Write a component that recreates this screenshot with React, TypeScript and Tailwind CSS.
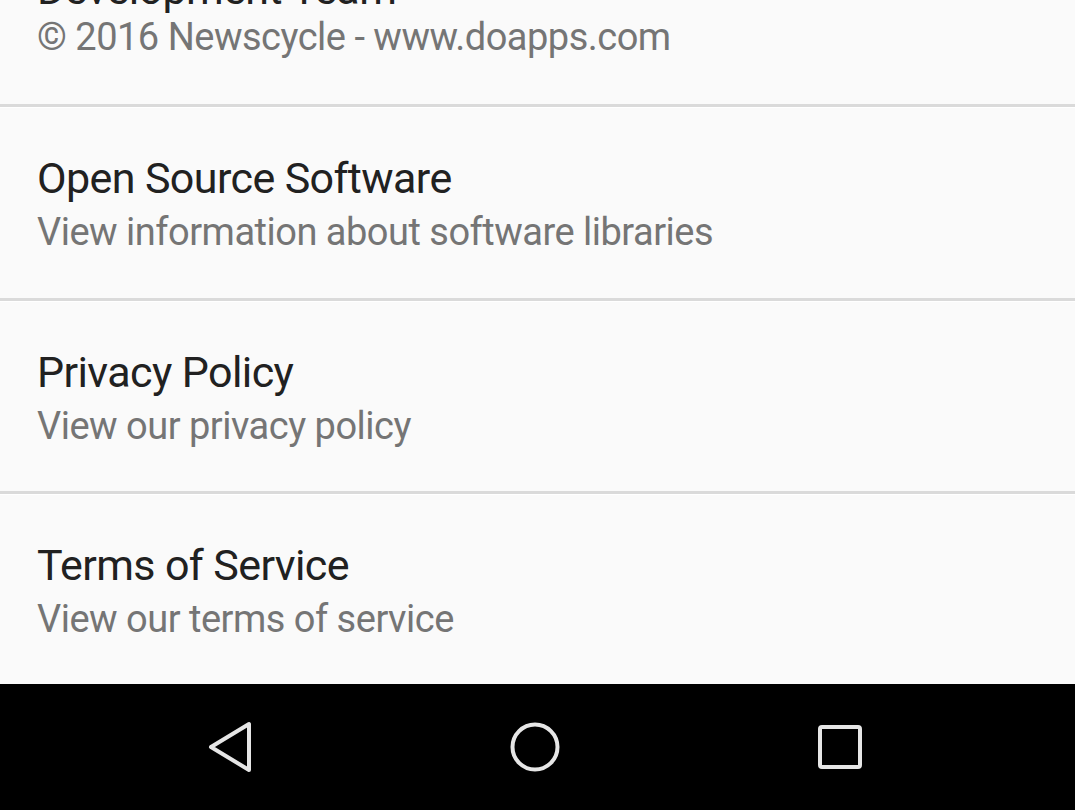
const items = [
  { title: "Open Source Software", subtitle: "View information about software libraries", pad: "pb-[40px]" },
  { title: "Privacy Policy", subtitle: "View our privacy policy", pad: "pb-[39px]" },
  { title: "Terms of Service", subtitle: "View our terms of service", pad: "pb-[39px]" },
];

function Divider() {
  return (
    <div className="flex flex-col">
      <div className="h-[3px] bg-[#dadada]" />
      <div className="h-px bg-white" />
    </div>
  );
}

function Title({ children }: { children: string }) {
  return (
    <div className="text-[43px] leading-[50px] tracking-[-0.6px] text-[#212121] whitespace-nowrap">
      {children}
    </div>
  );
}

function Subtitle({ children }: { children: string }) {
  return (
    <div className="mt-[3px] text-[38px] leading-[52px] tracking-[-0.5px] text-[#757575] whitespace-nowrap">
      {children}
    </div>
  );
}

function SettingRow({ title, subtitle, pad }: { title: string; subtitle: string; pad: string }) {
  return (
    <div className={`px-[37px] pt-[45px] ${pad}`}>
      <Title>{title}</Title>
      <Subtitle>{subtitle}</Subtitle>
    </div>
  );
}

function NavBar() {
  return (
    <div className="h-[126px] bg-black flex items-center justify-center gap-[255px] pr-[6px]">
      <svg width="48" height="52" viewBox="0 0 48 52" fill="none">
        <path d="M43 3 L43 49 L5 26 Z" stroke="#e6e6e6" strokeWidth="4" strokeLinejoin="round" />
      </svg>
      <svg width="52" height="52" viewBox="0 0 52 52" fill="none">
        <circle cx="26" cy="26" r="22.5" stroke="#e6e6e6" strokeWidth="4" />
      </svg>
      <svg width="48" height="48" viewBox="0 0 48 48" fill="none">
        <rect x="4" y="4" width="40" height="40" rx="2" stroke="#e6e6e6" strokeWidth="4" />
      </svg>
    </div>
  );
}

export default function App() {
  return (
    <div
      className="w-[1075px] h-[810px] overflow-hidden bg-[#fafafa] flex flex-col"
      style={{ fontFamily: "Roboto, 'Noto Sans', sans-serif" }}
    >
      <div className="px-[37px] pb-[41px] mt-[-36px]">
        <Title>Development Team</Title>
        <div className="mt-[-3px] text-[38px] leading-[52px] tracking-[-0.5px] text-[#757575] whitespace-nowrap">
          © 2016 Newscycle - www.doapps.com
        </div>
      </div>
      {items.map((item) => (
        <div key={item.title}>
          <Divider />
          <SettingRow title={item.title} subtitle={item.subtitle} pad={item.pad} />
        </div>
      ))}
      <NavBar />
    </div>
  );
}
